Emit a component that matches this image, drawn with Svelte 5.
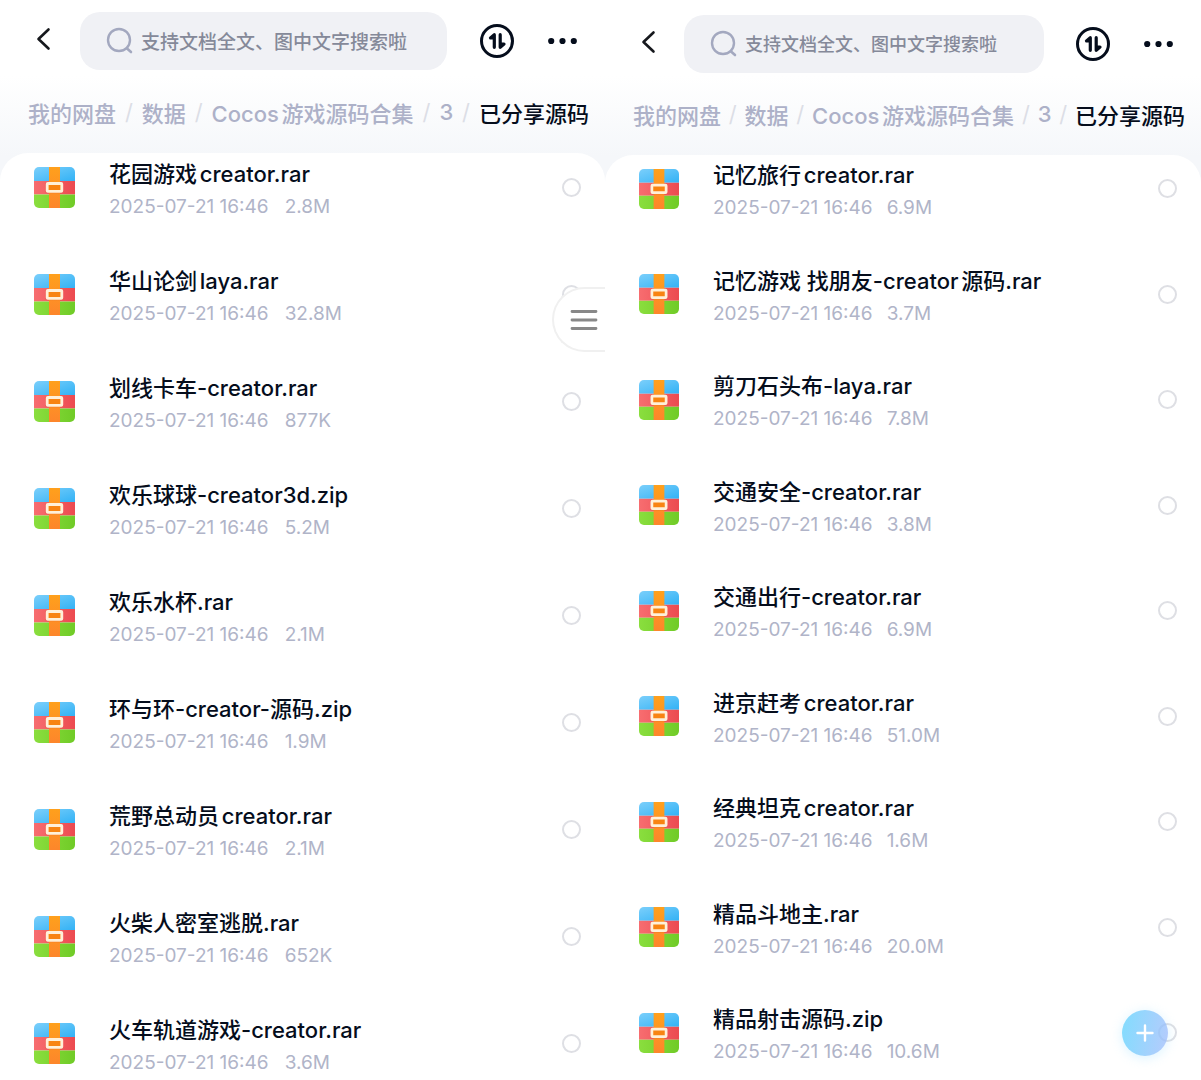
<script lang="ts">
	type File = { name: string; size: string };
	type Panel = { id: string; compact: boolean; files: File[] };

	const crumbs = ['我的网盘', '数据', 'Cocos游戏源码合集', '3', '已分享源码'];
	const modified = '2025-07-21 16:46';

	const panels: Panel[] = [
		{
			id: 'left',
			compact: false,
			files: [
				{ name: '花园游戏creator.rar', size: '2.8M' },
				{ name: '华山论剑laya.rar', size: '32.8M' },
				{ name: '划线卡车-creator.rar', size: '877K' },
				{ name: '欢乐球球-creator3d.zip', size: '5.2M' },
				{ name: '欢乐水杯.rar', size: '2.1M' },
				{ name: '环与环-creator-源码.zip', size: '1.9M' },
				{ name: '荒野总动员creator.rar', size: '2.1M' },
				{ name: '火柴人密室逃脱.rar', size: '652K' },
				{ name: '火车轨道游戏-creator.rar', size: '3.6M' }
			]
		},
		{
			id: 'right',
			compact: true,
			files: [
				{ name: '记忆旅行creator.rar', size: '6.9M' },
				{ name: '记忆游戏 找朋友-creator源码.rar', size: '3.7M' },
				{ name: '剪刀石头布-laya.rar', size: '7.8M' },
				{ name: '交通安全-creator.rar', size: '3.8M' },
				{ name: '交通出行-creator.rar', size: '6.9M' },
				{ name: '进京赶考creator.rar', size: '51.0M' },
				{ name: '经典坦克creator.rar', size: '1.6M' },
				{ name: '精品斗地主.rar', size: '20.0M' },
				{ name: '精品射击源码.zip', size: '10.6M' }
			]
		}
	];
</script>

{#snippet archiveIcon()}
	<svg class="archive" viewBox="0 0 41 41" aria-hidden="true">
		<defs>
			<linearGradient id="sky" x1="0" y1="0" x2="1" y2="1">
				<stop offset="0" stop-color="#7bcffb" />
				<stop offset="1" stop-color="#33b2f5" />
			</linearGradient>
			<linearGradient id="coral" x1="0" y1="0" x2="1" y2="0">
				<stop offset="0" stop-color="#f76d70" />
				<stop offset="1" stop-color="#ec4a50" />
			</linearGradient>
			<linearGradient id="grass" x1="0" y1="0" x2="1" y2="0">
				<stop offset="0" stop-color="#8ade3e" />
				<stop offset="1" stop-color="#70cb27" />
			</linearGradient>
			<linearGradient id="strap" x1="0" y1="0" x2="0" y2="1">
				<stop offset="0" stop-color="#ffa01c" />
				<stop offset="1" stop-color="#fd862b" />
			</linearGradient>
		</defs>
		<path d="M0 14V5a5 5 0 0 1 5-5h31a5 5 0 0 1 5 5v9z" fill="url(#sky)" />
		<path d="M0 14h41v13.500H0z" fill="url(#coral)" />
		<path d="M0 27.500h41V36a5 5 0 0 1-5 5H5a5 5 0 0 1-5-5z" fill="url(#grass)" />
		<path d="M15 0h11v41H15z" fill="url(#strap)" />
		<rect x="11.500" y="15.200" width="17.500" height="11" rx="1.500" fill="#d9532c" opacity="0.350" />
		<rect x="13.200" y="16.500" width="14.600" height="7.800" rx="0.600" fill="#f88412" stroke="#fff0d9" stroke-width="2.800" />
	</svg>
{/snippet}

<main>
	{#each panels as panel (panel.id)}
		<section class="panel" class:compact={panel.compact}>
			<header>
				<button class="back" aria-label="返回">
					<svg width="20" height="24" viewBox="0 0 20 24">
						<path d="M15.500 2.500 5.500 12l10 9.500" fill="none" stroke="#16181d" stroke-width="2.600" stroke-linecap="round" stroke-linejoin="round" />
					</svg>
				</button>
				<label class="search">
					<svg width="28" height="28" viewBox="0 0 28 28" aria-hidden="true">
						<circle cx="13" cy="13" r="11" fill="none" stroke="#a3a8bf" stroke-width="2.400" />
						<path d="m21 21.500 4 3.500" stroke="#a3a8bf" stroke-width="2.600" stroke-linecap="round" />
					</svg>
					<input type="text" aria-label="搜索" placeholder="支持文档全文、图中文字搜索啦" />
				</label>
				<button class="sort" aria-label="排序">
					<svg width="34" height="34" viewBox="0 0 34 34">
						<circle cx="17" cy="17" r="15.500" fill="none" stroke="#050d1c" stroke-width="3" />
						<path d="M14.300 23.300V10.700l-3.800 3.200h3.800M20.200 10.700v12.600l3.800-3.200h-3.800" fill="#050d1c" stroke="#050d1c" stroke-width="3.200" stroke-linecap="round" stroke-linejoin="round" />
					</svg>
				</button>
				<button class="more" aria-label="更多">
					<svg width="29" height="8" viewBox="0 0 29 8">
						<circle cx="3.200" cy="4" r="3.100" fill="#050d1c" />
						<circle cx="14.500" cy="4" r="3.100" fill="#050d1c" />
						<circle cx="25.800" cy="4" r="3.100" fill="#050d1c" />
					</svg>
				</button>
			</header>

			<nav>
				{#each crumbs as crumb, i}
					{#if i > 0}<span class="slash">/</span>{/if}
					<a href="#{crumb}" class:current={i === crumbs.length - 1}>{crumb}</a>
				{/each}
			</nav>

			<div class="sheet">
				<ul>
					{#each panel.files as file, i}
						<li>
							{@render archiveIcon()}
							<label class="info" for="{panel.id}-{i}">
								<span class="name">{file.name}</span>
								<span class="meta"><span>{modified}</span><span>{file.size}</span></span>
							</label>
							<input type="checkbox" id="{panel.id}-{i}" />
						</li>
					{/each}
				</ul>
			</div>

			{#if panel.compact}
				<button class="add" aria-label="新建">
					<svg width="18" height="18" viewBox="0 0 18 18">
						<path d="M9 1.500v15M1.500 9h15" stroke="#fff" stroke-width="2.400" stroke-linecap="round" />
					</svg>
				</button>
			{:else}
				<button class="drawer" aria-label="菜单">
					<svg width="28" height="22" viewBox="0 0 28 22">
						<path d="M2 2.500h24M2 11h24M2 19.500h24" stroke="#888" stroke-width="2.800" stroke-linecap="round" />
					</svg>
				</button>
			{/if}
		</section>
	{/each}
</main>

<style>
	:global(body) {
		background: #fff;
		font-family: Inter, 'Noto Sans CJK SC', sans-serif;
		text-autospace: normal;
	}

	main {
		display: grid;
		grid-template-columns: 605fr 596fr;
		min-height: 100vh;
	}

	.panel {
		position: relative;
		display: flex;
		flex-direction: column;
		min-width: 0;
		background: linear-gradient(#fff 76px, #f5f7fa 156px);
	}

	button {
		display: flex;
		align-items: center;
		justify-content: center;
		flex: none;
		padding: 0;
		border: 0;
		background: none;
		cursor: pointer;
	}

	header {
		display: flex;
		align-items: center;
		padding: 12px 28px 0 33px;
	}

	.compact header {
		padding-top: 15px;
	}

	.back {
		height: 58px;
		padding-bottom: 4px;
		box-sizing: border-box;
	}

	.search {
		display: flex;
		flex: 1;
		align-items: center;
		gap: 7px;
		min-width: 0;
		height: 58px;
		margin: 0 33px 0 27px;
		padding: 0 20px 0 26px;
		box-sizing: border-box;
		border-radius: 20px;
		background: #f0f1f5;
	}

	.compact .search {
		margin: 0 32px 0 26px;
	}

	.search svg {
		flex: none;
	}

	.search input {
		flex: 1;
		min-width: 0;
		padding: 0 0 2px;
		border: 0;
		outline: 0;
		background: none;
		font: 500 19px 'Noto Sans CJK SC', sans-serif;
	}

	.compact .search input {
		font-size: 18px;
	}

	.search input::placeholder {
		color: #858999;
		opacity: 1;
	}

	.more {
		margin-left: 34px;
	}

	nav {
		display: flex;
		align-items: center;
		height: 83px;
		padding: 0 16px 0 28px;
		box-sizing: border-box;
		font-size: 22px;
		font-weight: 500;
		white-space: nowrap;
	}

	.compact nav {
		height: 82px;
	}

	nav a {
		color: #adb1c8;
		text-decoration: none;
	}

	nav a.current {
		color: #050d1c;
	}

	.slash {
		width: 26px;
		color: #dcdee6;
		text-align: center;
		font-weight: 400;
	}

	.sheet {
		display: flex;
		flex: 1;
		padding: 5px 24px 0 34px;
		border-radius: 28px 28px 0 0;
		background: #fff;
	}

	.compact .sheet {
		padding: 4px 24px 11px 34px;
	}

	ul {
		display: flex;
		flex: 1;
		flex-direction: column;
		justify-content: space-between;
		min-width: 0;
		margin: 0;
		padding: 0;
		list-style: none;
	}

	li {
		display: flex;
		align-items: center;
		height: 66px;
	}

	.archive {
		flex: none;
		width: 41px;
		height: 41px;
		margin-bottom: 7px;
	}

	.info {
		display: flex;
		flex: 1;
		flex-direction: column;
		min-width: 0;
		margin-left: 34px;
		white-space: nowrap;
	}

	.name {
		color: #050d1c;
		font-size: 22px;
		font-weight: 500;
		line-height: 32px;
	}

	.meta {
		display: flex;
		gap: 16px;
		color: #b0b4c8;
		font-size: 19px;
		line-height: 34px;
	}

	.compact .archive {
		width: 40px;
		height: 40px;
	}

	.compact .meta {
		gap: 14px;
	}

	li input {
		appearance: none;
		flex: none;
		width: 19px;
		height: 19px;
		margin: 0 0 7px;
		border: 2px solid #dedfe4;
		border-radius: 50%;
	}

	li input:checked {
		background: #7cc4fb;
	}

	.drawer {
		position: absolute;
		top: 287px;
		right: 0;
		width: 53px;
		height: 65px;
		padding-left: 9px;
		box-sizing: border-box;
		border: 2px solid #f0f0f0;
		border-right: 0;
		border-radius: 33px 0 0 33px;
		background: #fff;
	}

	.add {
		position: absolute;
		right: 33px;
		bottom: 24px;
		width: 46px;
		height: 46px;
		border-radius: 50%;
		background: linear-gradient(100deg, #78dafeee, #9cb8fbbb);
		box-shadow: 0 2px 12px #8fdcff55;
	}
</style>
